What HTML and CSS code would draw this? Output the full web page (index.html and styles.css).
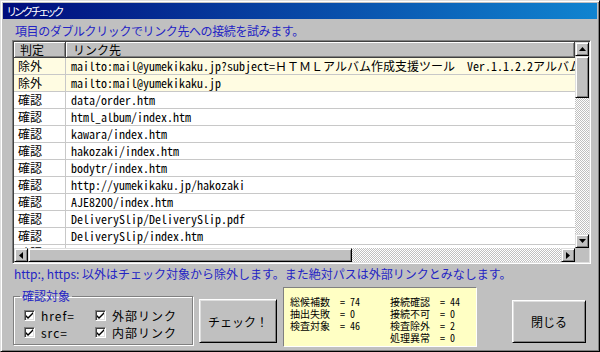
FILE: index.html
```html
<!DOCTYPE html>
<html lang="ja">
<head>
  <meta charset="UTF-8">
  <meta name="viewport" content="width=device-width, initial-scale=1.0">
  <title>リンクチェック</title>
  <link rel="stylesheet" href="styles.css">
</head>
<body>
  <div class="window">
    <div class="titlebar">
      <span class="title">リンクチェック</span>
    </div>
    <div class="client">
      <p class="hint">項目のダブルクリックでリンク先への接続を試みます。</p>

      <div class="listview">
        <div class="lv-view">
          <div class="lv-head">
            <div class="lv-col lv-judge">判定</div>
            <div class="lv-col lv-url">リンク先</div>
          </div>
          <div class="lv-row excluded"><span class="lv-judge">除外</span><span class="lv-url">mailto:mail@yumekikaku.jp?subject=ＨＴＭＬアルバム作成支援ツール　Ver.1.1.2.2アルバム作成</span></div>
          <div class="lv-row excluded"><span class="lv-judge">除外</span><span class="lv-url">mailto:mail@yumekikaku.jp</span></div>
          <div class="lv-row"><span class="lv-judge">確認</span><span class="lv-url">data/order.htm</span></div>
          <div class="lv-row"><span class="lv-judge">確認</span><span class="lv-url">html_album/index.htm</span></div>
          <div class="lv-row"><span class="lv-judge">確認</span><span class="lv-url">kawara/index.htm</span></div>
          <div class="lv-row"><span class="lv-judge">確認</span><span class="lv-url">hakozaki/index.htm</span></div>
          <div class="lv-row"><span class="lv-judge">確認</span><span class="lv-url">bodytr/index.htm</span></div>
          <div class="lv-row"><span class="lv-judge">確認</span><span class="lv-url">http://yumekikaku.jp/hakozaki</span></div>
          <div class="lv-row"><span class="lv-judge">確認</span><span class="lv-url">AJE8200/index.htm</span></div>
          <div class="lv-row"><span class="lv-judge">確認</span><span class="lv-url">DeliverySlip/DeliverySlip.pdf</span></div>
          <div class="lv-row"><span class="lv-judge">確認</span><span class="lv-url">DeliverySlip/index.htm</span></div>
          <div class="lv-row"><span class="lv-judge">確認</span><span class="lv-url">http://yumekikaku.jp/</span></div>
        </div>

        <div class="vscroll">
          <button class="sb-btn"><svg width="7" height="4" viewBox="0 0 7 4"><path d="M3.5 0 L7 4 L0 4 Z" fill="#000"/></svg></button>
          <div class="sb-thumb vthumb"></div>
          <div class="sb-track"></div>
          <button class="sb-btn"><svg width="7" height="4" viewBox="0 0 7 4"><path d="M0 0 L7 0 L3.5 4 Z" fill="#000"/></svg></button>
        </div>

        <div class="hscroll">
          <button class="sb-btn"><svg width="4" height="7" viewBox="0 0 4 7"><path d="M4 0 L4 7 L0 3.5 Z" fill="#000"/></svg></button>
          <div class="sb-thumb hthumb"></div>
          <div class="sb-track"></div>
          <button class="sb-btn"><svg width="4" height="7" viewBox="0 0 4 7"><path d="M0 0 L4 3.5 L0 7 Z" fill="#000"/></svg></button>
        </div>

        <div class="sb-corner"></div>
      </div>

      <p class="note">http:, https: 以外はチェック対象から除外します。また絶対パスは外部リンクとみなします。</p>

      <div class="bottom">
        <fieldset class="group">
          <legend>確認対象</legend>
          <label class="check"><span class="cb"><svg width="7" height="7" viewBox="0 0 7 7"><path d="M0 3 L2 5 L7 0 L7 2 L2 7 L0 5 Z" fill="#000"/></svg></span>href=</label>
          <label class="check"><span class="cb"><svg width="7" height="7" viewBox="0 0 7 7"><path d="M0 3 L2 5 L7 0 L7 2 L2 7 L0 5 Z" fill="#000"/></svg></span>外部リンク</label>
          <label class="check"><span class="cb"><svg width="7" height="7" viewBox="0 0 7 7"><path d="M0 3 L2 5 L7 0 L7 2 L2 7 L0 5 Z" fill="#000"/></svg></span>src=</label>
          <label class="check"><span class="cb"><svg width="7" height="7" viewBox="0 0 7 7"><path d="M0 3 L2 5 L7 0 L7 2 L2 7 L0 5 Z" fill="#000"/></svg></span>内部リンク</label>
        </fieldset>

        <button class="btn btn-check">チェック！</button>

        <div class="stats">
          <span>総候補数  = 74</span><span>接続確認  = 44</span>
          <span>抽出失敗  = 0</span><span>接続不可  = 0</span>
          <span>検査対象  = 46</span><span>検査除外  = 2</span>
          <span></span><span>処理異常  = 0</span>
        </div>

        <button class="btn btn-close">閉じる</button>
      </div>
    </div>
  </div>
</body>
</html>
```
FILE: styles.css
```css
* {
  margin: 0;
  padding: 0;
  box-sizing: border-box;
}
body {
  font-family: "Noto Sans CJK JP", sans-serif;
  font-size: 12px;
  background-color: #c0c0c0;
}
.window {
  width: 600px;
  height: 352px;
  background-color: #c0c0c0;
  border: 1px solid;
  border-color: #dfdfdf #000 #000 #dfdfdf;
  box-shadow: inset 1px 1px #fff, inset -1px -1px #808080;
  padding: 2px;
}
.titlebar {
  height: 16px;
  background: linear-gradient(90deg, #000c7c, #1084d0);
  display: flex;
  align-items: center;
  padding-left: 4px;
}
.title {
  color: #fff;
  font-size: 11px;
  line-height: 14px;
  letter-spacing: -1.6px;
  font-feature-settings: "palt";
}
.hint {
  margin: 5px 0 0 12px;
  color: #2424c4;
  line-height: 14px;
  letter-spacing: -0.4px;
}
.listview {
  margin: 2px 0 0 9px;
  width: 579px;
  height: 224px;
  border: 1px solid;
  border-color: #808080 #fff #fff #808080;
  box-shadow: inset 1px 1px #404040, inset -1px -1px #dfdfdf;
  padding: 1px;
  display: grid;
  grid-template-columns: 561px 14px;
  grid-template-rows: 206px 14px;
}
.lv-view {
  background-color: #fff;
  overflow: hidden;
}
.lv-head {
  display: flex;
  height: 16px;
  background-color: #c0c0c0;
}
.lv-col {
  line-height: 15px;
  border-right: 1px solid #404040;
  border-bottom: 1px solid #404040;
  box-shadow: inset 1px 1px #fff, inset -1px -1px #808080;
  padding-left: 6px;
}
.lv-head .lv-judge {
  width: 52px;
}
.lv-head .lv-url {
  flex: 1;
  padding-left: 7px;
}
.lv-row {
  display: flex;
  height: 17px;
  border-bottom: 1px solid #c8c8c8;
  white-space: nowrap;
}
.lv-row.excluded {
  background-color: #fffce2;
}
.lv-row .lv-judge {
  width: 52px;
  flex: none;
  padding-left: 4px;
  line-height: 16px;
  border-right: 1px solid #c8c8c8;
}
.lv-row .lv-url {
  padding-left: 5px;
  font-family: "Noto Sans Mono CJK JP", "Liberation Mono", monospace;
  line-height: 16px;
}
.vscroll {
  display: grid;
  grid-template-rows: 14px 42px 1fr 14px;
}
.hscroll {
  display: grid;
  grid-template-columns: 14px 324px 1fr 14px;
}
.sb-btn,
.sb-thumb {
  background-color: #c0c0c0;
  border: 1px solid;
  border-color: #dfdfdf #000 #000 #dfdfdf;
  box-shadow: inset 1px 1px #fff, inset -1px -1px #808080;
}
.sb-btn {
  display: grid;
  place-items: center;
}
.sb-track {
  background-color: #fff;
  background-image: repeating-conic-gradient(#c0c0c0 0 25%, #fff 0 50%);
  background-size: 2px 2px;
}
.sb-corner {
  background-color: #c0c0c0;
}
.note {
  margin: 3px 0 0 11px;
  color: #2424c4;
  line-height: 14px;
}
.bottom {
  display: flex;
  align-items: flex-start;
  margin-top: 5px;
}
.group {
  margin: 4px 0 0 10px;
  width: 180px;
  height: 55px;
  border: 1px solid #808080;
  box-shadow: inset 1px 1px #fff, 1px 1px #fff;
  padding: 5px 0 0 10px;
  display: grid;
  grid-template-columns: 71px 1fr;
  grid-auto-rows: 17px;
}
.group legend {
  margin-left: -4px;
  padding: 0 2px;
  color: #2424c4;
  line-height: 12px;
}
.check {
  display: flex;
  align-items: center;
  gap: 6px;
  letter-spacing: 1px;
}
.cb {
  width: 11px;
  height: 11px;
  background-color: #fff;
  border: 1px solid;
  border-color: #808080 #fff #fff #808080;
  box-shadow: inset 1px 1px #404040, inset -1px -1px #dfdfdf;
  display: grid;
  place-items: center;
}
.btn {
  font-family: "Noto Sans CJK JP", sans-serif;
  font-size: 12px;
  background-color: #c0c0c0;
  border: 1px solid;
  border-color: #fff #000 #000 #fff;
  box-shadow: inset 1px 1px #dfdfdf, inset -1px -1px #808080;
}
.btn-check {
  margin: 13px 0 0 6px;
  width: 78px;
  height: 44px;
}
.stats {
  margin: 1px 0 0 6px;
  width: 194px;
  height: 60px;
  background-color: #ffffc4;
  border: 1px solid;
  border-color: #808080 #fff #fff #808080;
  padding: 8px 0 0 6px;
  display: grid;
  grid-template-columns: 100px 1fr;
  grid-auto-rows: 12px;
  font-family: "Noto Sans Mono CJK JP", "Liberation Mono", monospace;
  font-size: 10px;
  line-height: 12px;
  white-space: pre;
}
.btn-close {
  margin: 14px 0 0 35px;
  width: 74px;
  height: 43px;
}
```
